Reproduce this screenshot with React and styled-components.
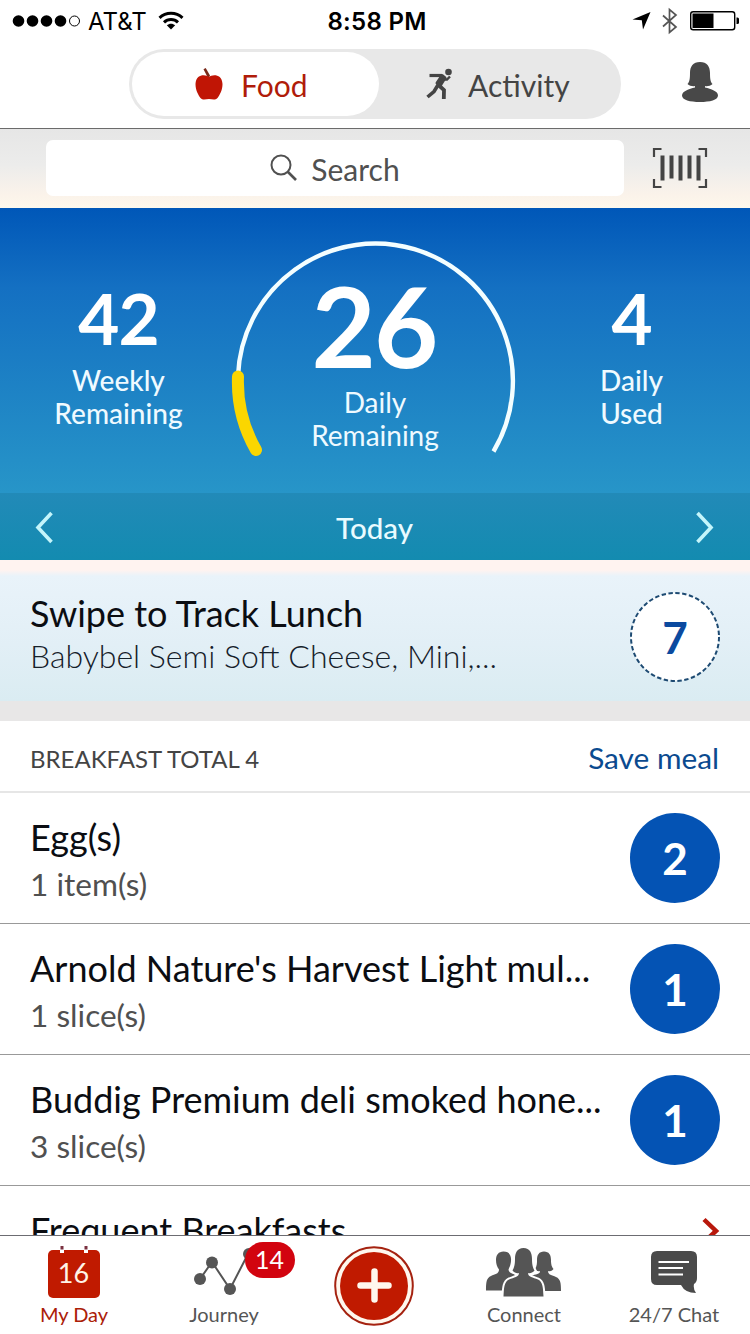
import React from 'react';
import styled, { createGlobalStyle } from 'styled-components';

const GlobalStyle = createGlobalStyle`
    * {
        box-sizing: border-box;
    }

    body {
        margin: 0;
        background-color: #fff;
        font-family: Lato, "Liberation Sans", sans-serif;
        color: #0b0d12;
    }
`;

const Screen = styled.div`
    display: flex;
    flex-direction: column;
    width: 750px;
    height: 1334px;
    overflow: hidden;
    background-color: #fff;
`;

const StatusBar = styled.div`
    display: grid;
    grid-template-columns: 1fr auto 1fr;
    align-items: center;
    flex: none;
    height: 42px;
    padding: 0 10px 0 12px;
    font-family: Inter, "Liberation Sans", sans-serif;
    font-size: 24px;
    color: #000;
`;

const StatusGroup = styled.div`
    display: flex;
    align-items: center;
    justify-content: ${props => props.end ? 'flex-end' : 'flex-start'};
`;

const Carrier = styled.span`
    margin: 0 11px 0 7px;
`;

const Clock = styled.div`
    padding-left: 2px;
    font-weight: 600;
    letter-spacing: 0.3px;
`;

const Header = styled.div`
    display: flex;
    flex: none;
    height: 87px;
    padding: 7px 31px 0 129px;
    border-bottom: 1px solid #6b6b6b;
`;

const Switch = styled.div`
    display: flex;
    width: 492px;
    height: 70px;
    padding: 3px;
    border-radius: 35px;
    background-color: #e8e8e8;
`;

const SwitchTab = styled.div`
    display: flex;
    align-items: center;
    width: ${props => props.active ? 247 : 239}px;
    padding: 2px 0 0 ${props => props.active ? 63 : 46}px;
    border-radius: 32px;
    background-color: ${props => props.active ? '#fff' : 'transparent'};
    color: ${props => props.active ? '#b01c0a' : '#444'};
    font-size: 30px;
    line-height: 36px;

    svg {
        margin: -2px ${props => props.active ? 18 : 15}px 0 0;
    }
`;

const Profile = styled.div`
    margin: 12px 0 0 auto;
`;

const SearchBar = styled.div`
    display: flex;
    flex: none;
    height: 79px;
    padding: 11px 42px 0 46px;
    background: linear-gradient(#e6e6e6, #ececeb 45%, #fbf3ea 85%, #fdf8ec);
`;

const SearchField = styled.div`
    display: flex;
    align-items: center;
    justify-content: center;
    width: 578px;
    height: 56px;
    padding: 1px 0 0 0;
    border-radius: 7px;
    background-color: #fff;
    color: #505050;
    font-size: 30px;

    svg {
        margin: -3px 14px 0 0;
    }
`;

const Scan = styled.div`
    margin: 7px 0 0 auto;
`;

const Hero = styled.div`
    display: grid;
    grid-template-columns: 237px 276px 237px;
    flex: none;
    height: 285px;
    background: linear-gradient(#0057b8, #1470c2 28%, #2795c8);
    color: #fff;
    text-align: center;
`;

const Stat = styled.div`
    padding-top: 73px;
`;

const StatValue = styled.div`
    height: ${props => props.big ? 117 : 83}px;
    padding-right: ${props => props.big ? 2 : 0}px;
    font-size: ${props => props.big ? 111 : 71}px;
    font-weight: 700;
    line-height: ${props => props.big ? 112 : 73}px;
    letter-spacing: ${props => props.big ? -2 : -1}px;
`;

const StatLabel = styled.div`
    color: #effaff;
    font-size: 28px;
    font-weight: ${props => props.strong ? 500 : 400};
    line-height: 33px;
`;

const Dial = styled.div`
    position: relative;
    padding-top: 61px;
`;

const DialArc = styled.svg`
    position: absolute;
    top: 31px;
    left: -9px;
`;

const DayBar = styled.div`
    display: flex;
    align-items: center;
    justify-content: space-between;
    flex: none;
    height: 67px;
    padding: 2px 35px 0 34px;
    background: linear-gradient(#228ab8, #138bb0);
    color: #e9fbff;
    font-size: 29.5px;
    font-weight: 500;
`;

const Suggestion = styled.div`
    display: flex;
    justify-content: space-between;
    flex: none;
    height: 141px;
    padding: 31px 30px 0;
    background: linear-gradient(#fff3f0 0, #fff3f0 10px, #e9f3fa 16px, #e2eff6 60%, #daecf2);
`;

const SuggestionText = styled.div`
    padding-top: 1px;
    font-size: 32px;
    font-weight: 300;
    line-height: 40px;
    color: #15202a;
`;

const Spacer = styled.div`
    flex: none;
    height: 20px;
    background-color: #e8e7e7;
`;

const MealHeader = styled.div`
    display: flex;
    align-items: center;
    justify-content: space-between;
    flex: none;
    height: 72px;
    padding: 4px 31px 0 30px;
    border-bottom: 2px solid #e6e6e6;
    color: #444;
    font-size: 24px;
`;

const SaveMeal = styled.span`
    margin-top: -2px;
    color: #0b4a8f;
    font-size: 29.8px;
`;

const Row = styled.div`
    display: flex;
    justify-content: space-between;
    flex: none;
    height: 131px;
    padding: 22px 30px 0;
    border-bottom: 1px solid #999;
`;

const Title = styled.div`
    font-size: 36px;
    line-height: 44px;
    white-space: nowrap;
`;

const Portion = styled.div`
    margin-top: 5px;
    color: #505050;
    font-size: 31.6px;
    line-height: 40px;
`;

const Points = styled.div`
    display: flex;
    align-items: center;
    justify-content: center;
    width: 90px;
    height: 90px;
    margin-top: -2px;
    border-radius: 50%;
    background-color: #0453b4;
    color: #fff;
    font-size: 44px;
    font-weight: 700;
`;

const More = styled.div`
    display: flex;
    align-items: flex-start;
    justify-content: space-between;
    flex: 1;
    min-height: 0;
    padding: 22px 30px 0;
    overflow: hidden;
`;

const MoreArrow = styled.svg`
    margin-top: 6px;
`;

const TabBar = styled.div`
    display: grid;
    grid-template-columns: repeat(5, 150px);
    flex: none;
    height: 99px;
    margin-left: -1px;
    border-top: 1px solid #6c6c72;
    background-color: #fff;
`;

const Tab = styled.div`
    display: flex;
    flex-direction: column;
    align-items: center;
    color: ${props => props.active ? '#ab2008' : '#555'};
    font-size: 20px;
    line-height: 24px;
`;

const AppleIcon = () => (
    <svg width="28" height="32" viewBox="0 0 28 32">
        <path d="M8.5 1.2 L10.7 0 L15 7.5 L14 9.5 L12.5 9 Z" fill="#7a2a1a" />
        <path
            d="M14 9 C17 6.5 27 5.5 27.5 16 C27.5 22 25 26.5 22.5 30 C20 32.5 17 31 14 31 C11 31 8 32.5 5.5 30 C3 26.5 .5 22 .5 16 C1 5.500 11 6.500 14 9 Z"
            fill="#c01505"
        />
    </svg>
);

const RunnerIcon = () => (
    <svg width="28" height="32" viewBox="0 0 28 32" fill="none" stroke="#444">
        <circle cx="23.500" cy="4" r="3.300" fill="#444" stroke="none" />
        <path d="M4.500 7.500 H17" strokeWidth="3.200" />
        <path d="M17 7.500 L20 10 L15 18 L12 15 Z" fill="#444" strokeWidth="3" strokeLinejoin="round" />
        <path d="M19 11.500 L22 11.500 L25 8.500" strokeWidth="2.400" />
        <path d="M13 17 L9 23.500 L2.500 29" strokeWidth="3.600" />
        <path d="M14 17.500 L19 22 L18.800 31" strokeWidth="3.800" />
    </svg>
);

const ProfileIcon = () => (
    <svg width="38" height="42" viewBox="0 0 38 42" fill="#484848">
        <path d="M19 1 C26 1 29 5.500 29 12 C29 18 29.500 21 31.500 23 C29.500 25 26 25.500 24 25 V26.500 C30 28 37 30 37 34.500 C37 39 29 41 19 41 C9 41 1 39 1 34.500 C1 30 8 28 14 26.500 V25 C12 25.500 8.500 25 6.500 23 C8.500 21 9 18 9 12 C9 5.500 12 1 19 1 Z" />
    </svg>
);

const SearchIcon = () => (
    <svg width="27" height="27" viewBox="0 0 27 27" fill="none" stroke="#505050" strokeWidth="2">
        <circle cx="11" cy="11" r="9.500" />
        <path d="M17.500 17.500 L26 26" strokeWidth="2.600" />
    </svg>
);

const ScanIcon = () => (
    <svg width="56" height="42" viewBox="0 0 56 42" fill="none" stroke="#444">
        <path d="M2 10 V2 H9.500 M46.500 2 H54 V10 M54 32 V40 H46.500 M9.500 40 H2 V32" strokeWidth="2.200" />
        <path d="M10.500 8.500 V33.500 M19.500 8.500 V31.500 M28.500 8.500 V33.500 M37.500 8.500 V31.500 M46.500 8.500 V33.500" strokeWidth="4" />
    </svg>
);

const Chevron = ({ left }) => (
    <svg width="20" height="34" viewBox="0 0 20 34" fill="none" stroke="#c4f5fb" strokeWidth="3.600">
        <path d={left ? 'M17.500 2 L4 16.500 L17.500 31' : 'M2.500 2 L16 16.500 L2.500 31'} />
    </svg>
);

const SignalIcon = () => (
    <svg width="69" height="14" viewBox="0 0 69 14">
        {[6.5, 20.5, 34.5, 48.5].map(x => <circle key={x} cx={x} cy="7" r="5.800" />)}
        <circle cx="62.500" cy="7" r="5" fill="none" stroke="#000" />
    </svg>
);

const WifiIcon = () => (
    <svg width="26" height="20" viewBox="0 0 26 20" fill="none" stroke="#000" strokeWidth="3">
        <path d="M1.500 6.800 C8 0.700 18 0.700 24.500 6.800" />
        <path d="M6 11.300 C10 7.500 16 7.500 20 11.300" />
        <path d="M13 18.500 L8.800 14.300 C11.200 12.200 14.800 12.200 17.200 14.300 Z" fill="#000" stroke="none" />
    </svg>
);

const StatusIcons = () => (
    <svg width="108" height="28" viewBox="0 0 108 28">
        <path d="M18.500 5 L11 22.500 L9.800 13.200 L0.500 12.500 Z" />
        <path d="M31 8.500 L44 20 L37.500 25.500 V2.500 L44 8 L31 19.500" fill="none" stroke="#555" strokeWidth="1.700" />
        <rect x="58.700" y="4.700" width="44" height="18" rx="2.500" fill="none" stroke="#000" strokeWidth="1.400" />
        <rect x="60.500" y="6.500" width="21" height="14.500" />
        <path d="M104.500 10.500 H105.500 Q107 10.500 107 12 V15.500 Q107 17 105.500 17 H104.500 Z" />
    </svg>
);

const CalendarIcon = () => (
    <svg width="150" height="66" viewBox="0 0 150 66">
        <rect x="49" y="14" width="52" height="48" rx="5" fill="#c01a00" />
        <path d="M61 10 H65 V17 H61 Z M85 10 H89 V17 H85 Z" fill="#fff" />
        <path d="M61.500 10 H64.500 V13.500 H61.500 Z M85.500 10 H88.500 V13.500 H85.500 Z" fill="#7a3040" />
        <text x="74.500" y="47" fill="#fff3e8" fontSize="27" textAnchor="middle">16</text>
    </svg>
);

const JourneyIcon = () => (
    <svg width="150" height="66" viewBox="0 0 150 66">
        <path d="M51 43 L63 26 L81 53 L99 18" fill="none" stroke="#555" strokeWidth="2" />
        <g fill="#555">
            <circle cx="51" cy="43" r="6" />
            <circle cx="63" cy="26.500" r="6" />
            <circle cx="81" cy="53" r="6" />
            <circle cx="100" cy="18" r="6" />
        </g>
        <rect x="96" y="6" width="50" height="36" rx="18" fill="#d2040f" />
        <text x="120.500" y="33" fill="#fff" fontSize="25" textAnchor="middle">14</text>
    </svg>
);

const AddIcon = () => (
    <svg width="80" height="98" viewBox="0 0 80 98">
        <circle cx="40" cy="50" r="38.800" fill="#fff8ee" stroke="#a52210" strokeWidth="2" />
        <circle cx="40" cy="50" r="34" fill="#c01a00" />
        <path d="M40.500 35.500 V63.500 M26.500 49.500 H54.500" stroke="#fff8ee" strokeWidth="6.500" strokeLinecap="round" />
    </svg>
);

const ConnectIcon = () => (
    <svg width="150" height="66" viewBox="0 0 150 66" fill="#555">
        <path d="M54.500 15.500 C60 15.500 62.500 19 62 25 C61.500 30 60.500 31 59.500 33.500 C60 38 65 37.500 69 40 L64 54.500 H37 C37 46 37.500 42 42 40 C46 38 50 38 50 33.500 C48 31 47 28 47 24 C47 19 49.500 15.500 54.500 15.500 Z" />
        <path d="M95 15.500 C100 15.500 102 19 102 24 C102 29 103 31 104.500 33 C103 35 101 35.500 99 35 C99 39 103 39 107 41 C111.500 43 112 47 112 55 H88 L82 40 C87 38 91 38.500 91 35 C89 35.500 87 35 86 33 C88 30 88 27 88 24 C88 19 90 15.500 95 15.500 Z" />
        <path
            d="M74.500 12 C81 12 83 17 83 23 C83 29 84 32 85.500 34.500 C83.500 37 81 37.500 79 37 C79 41 84 41.500 89 43.500 C94 46 94 52 94.500 60.500 H54.500 C55 52 55 46 60 43.500 C65 41.500 70 41 70 37 C68 37.500 65.500 37 63.500 34.500 C65 32 66 29 66 23 C66 17 68 12 74.500 12 Z"
            stroke="#fff"
            strokeWidth="4"
            paintOrder="stroke"
        />
    </svg>
);

const ChatIcon = () => (
    <svg width="150" height="66" viewBox="0 0 150 66">
        <path d="M58 15 H92 Q98 15 98 21 V42 Q98 46 95 48 Q94 53 97 57 Q86 57 82 49 H58 Q52 49 52 43 V21 Q52 15 58 15 Z" fill="#4a4a4a" />
        <path d="M59.500 26 H90 M59.500 32 H84 M59.500 38.500 H84" stroke="#fff" strokeWidth="2" />
    </svg>
);

const FOODS = [
    { name: 'Egg(s)', portion: '1 item(s)', points: 2 },
    { name: 'Arnold Nature\'s Harvest Light mul...', portion: '1 slice(s)', points: 1 },
    { name: 'Buddig Premium deli smoked hone...', portion: '3 slice(s)', points: 1 },
];

export default class App extends React.PureComponent {
    renderFood({ name, portion, points }) {
        return (
            <Row key={name}>
                <div>
                    <Title>{name}</Title>
                    <Portion>{portion}</Portion>
                </div>
                <Points>{points}</Points>
            </Row>
        );
    }

    renderHeader() {
        return (
            <React.Fragment>
                <StatusBar>
                    <StatusGroup>
                        <SignalIcon />
                        <Carrier>AT&amp;T</Carrier>
                        <WifiIcon />
                    </StatusGroup>
                    <Clock>8:58 PM</Clock>
                    <StatusGroup end>
                        <StatusIcons />
                    </StatusGroup>
                </StatusBar>
                <Header>
                    <Switch>
                        <SwitchTab active><AppleIcon />Food</SwitchTab>
                        <SwitchTab><RunnerIcon />Activity</SwitchTab>
                    </Switch>
                    <Profile><ProfileIcon /></Profile>
                </Header>
                <SearchBar>
                    <SearchField><SearchIcon />Search</SearchField>
                    <Scan><ScanIcon /></Scan>
                </SearchBar>
            </React.Fragment>
        );
    }

    renderSummary() {
        return (
            <React.Fragment>
                <Hero>
                    <Stat>
                        <StatValue>42</StatValue>
                        <StatLabel strong>Weekly<br />Remaining</StatLabel>
                    </Stat>
                    <Dial>
                        <DialArc width="294" height="230" viewBox="0 0 294 230" fill="none">
                            <path d="M10 137 A137.500 137.500 0 1 1 265.500 212.500" stroke="#f4feff" strokeWidth="4.400" />
                            <path d="M10 137.500 A137.500 137.500 0 0 0 28 211" stroke="#fbd600" strokeWidth="12" strokeLinecap="round" />
                        </DialArc>
                        <StatValue big>26</StatValue>
                        <StatLabel>Daily<br />Remaining</StatLabel>
                    </Dial>
                    <Stat>
                        <StatValue>4</StatValue>
                        <StatLabel strong>Daily<br />Used</StatLabel>
                    </Stat>
                </Hero>
                <DayBar>
                    <Chevron left />
                    Today
                    <Chevron />
                </DayBar>
            </React.Fragment>
        );
    }

    render() {
        return (
            <Screen>
                <GlobalStyle />
                {this.renderHeader()}
                {this.renderSummary()}
                <Suggestion>
                    <div>
                        <Title>Swipe to Track Lunch</Title>
                        <SuggestionText>Babybel Semi Soft Cheese, Mini,...</SuggestionText>
                    </div>
                    <svg width="90" height="92" viewBox="0 0 90 92">
                        <circle cx="45" cy="46" r="44" fill="#fff" stroke="#1d4a72" strokeWidth="2" strokeDasharray="4.400 2.510" />
                        <text x="45" y="62.500" fill="#0b4a9f" fontSize="44" fontWeight="700" textAnchor="middle">7</text>
                    </svg>
                </Suggestion>
                <Spacer />
                <MealHeader>
                    BREAKFAST TOTAL 4
                    <SaveMeal>Save meal</SaveMeal>
                </MealHeader>
                {FOODS.map(food => this.renderFood(food))}
                <More>
                    <Title>Frequent Breakfasts</Title>
                    <MoreArrow width="18" height="30" viewBox="0 0 18 30" fill="none" stroke="#b8180c" strokeWidth="4.500">
                        <path d="M2 5.500 L14 17 L2 28" />
                    </MoreArrow>
                </More>
                <TabBar>
                    <Tab active><CalendarIcon />My Day</Tab>
                    <Tab><JourneyIcon />Journey</Tab>
                    <Tab><AddIcon /></Tab>
                    <Tab><ConnectIcon />Connect</Tab>
                    <Tab><ChatIcon />24/7 Chat</Tab>
                </TabBar>
            </Screen>
        );
    }
}
